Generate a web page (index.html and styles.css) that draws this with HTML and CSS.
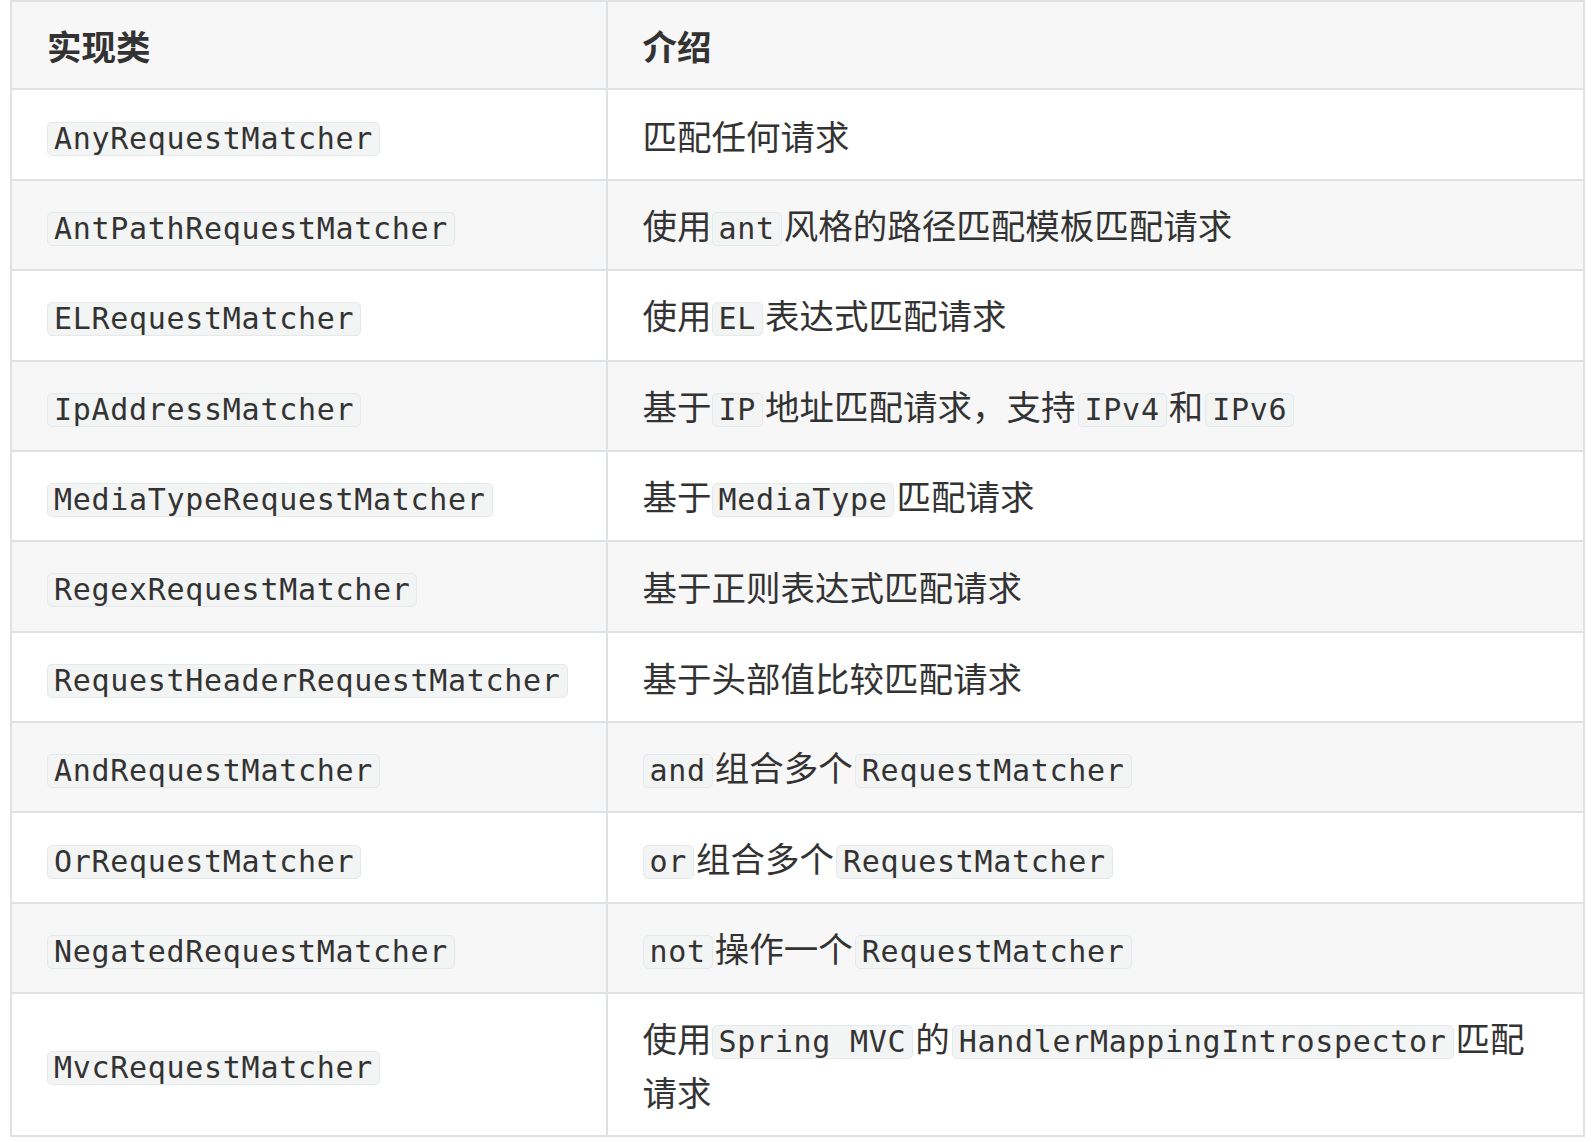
FILE: index.html
```html
<!DOCTYPE html>
<html lang="zh">
<head>
<meta charset="utf-8">
<title>RequestMatcher</title>
<link rel="stylesheet" href="styles.css">
</head>
<body>
<table class="md-table">
  <thead>
    <tr><th class="col-name">实现类</th><th>介绍</th></tr>
  </thead>
  <tbody>
    <tr><td><code>AnyRequestMatcher</code></td><td>匹配任何请求</td></tr>
    <tr><td><code>AntPathRequestMatcher</code></td><td>使用<code>ant</code>风格的路径匹配模板匹配请求</td></tr>
    <tr><td><code>ELRequestMatcher</code></td><td>使用<code>EL</code>表达式匹配请求</td></tr>
    <tr><td><code>IpAddressMatcher</code></td><td>基于<code>IP</code>地址匹配请求，支持<code>IPv4</code>和<code>IPv6</code></td></tr>
    <tr><td><code>MediaTypeRequestMatcher</code></td><td>基于<code>MediaType</code>匹配请求</td></tr>
    <tr><td><code>RegexRequestMatcher</code></td><td>基于正则表达式匹配请求</td></tr>
    <tr><td><code>RequestHeaderRequestMatcher</code></td><td>基于头部值比较匹配请求</td></tr>
    <tr><td><code>AndRequestMatcher</code></td><td><code>and</code>组合多个<code>RequestMatcher</code></td></tr>
    <tr><td><code>OrRequestMatcher</code></td><td><code>or</code>组合多个<code>RequestMatcher</code></td></tr>
    <tr><td><code>NegatedRequestMatcher</code></td><td><code>not</code>操作一个<code>RequestMatcher</code></td></tr>
    <tr><td><code>MvcRequestMatcher</code></td><td>使用<code>Spring MVC</code>的<code>HandlerMappingIntrospector</code>匹配<br>请求</td></tr>
  </tbody>
</table>
</body>
</html>
```
FILE: styles.css
```css
html, body {
  margin: 0;
  padding: 0;
  background: #ffffff;
}

body {
  font-family: "Noto Sans CJK SC", "Noto Sans", sans-serif;
  font-size: 34.5px;
  line-height: 52px;
  color: #333333;
}

.md-table {
  border-collapse: collapse;
  margin-left: 10px;
  width: 1575px;
}

.md-table th,
.md-table td {
  border: 2px solid #dfe2e5;
  padding: 17.2px 36px 17.2px 35px;
  text-align: left;
  vertical-align: middle;
}

.md-table th {
  font-weight: 700;
}

.md-table .col-name {
  width: 521px;
}

.md-table thead tr {
  background: #f7f7f7;
}

.md-table tbody tr:nth-child(even) {
  background: #f7f7f7;
}

.md-table code {
  display: inline-block;
  font-family: "DejaVu Sans Mono", "Liberation Mono", monospace;
  font-size: 30px;
  letter-spacing: 0.7px;
  line-height: 30px;
  padding: 1px 6px;
  margin: 0 2px 6px;
  background: #f3f4f4;
  border: 1px solid #e6e9ec;
  border-radius: 5px;
  color: #333333;
  vertical-align: baseline;
}

.md-table td code:first-child {
  margin-left: 0;
}
```
